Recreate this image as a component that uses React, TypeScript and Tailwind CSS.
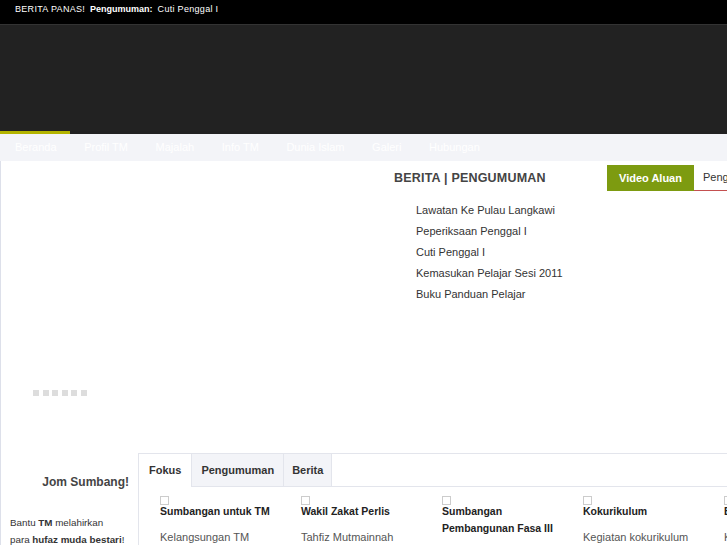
import React from "react";

const navItems = ["Beranda", "Profil TM", "Majalah", "Info TM", "Dunia Islam", "Galeri", "Hubungan"];

const newsItems = [
  "Lawatan Ke Pulau Langkawi",
  "Peperiksaan Penggal I",
  "Cuti Penggal I",
  "Kemasukan Pelajar Sesi 2011",
  "Buku Panduan Pelajar",
];

const focusCols = [
  { title: "Sumbangan untuk TM", text: "Kelangsungan TM" },
  { title: "Wakil Zakat Perlis", text: "Tahfiz Mutmainnah" },
  { title: "Sumbangan Pembangunan Fasa III", text: "" },
  { title: "Kokurikulum", text: "Kegiatan kokurikulum" },
  { title: "Buletin", text: "Keluaran" },
];

const App: React.FC = () => {
  return (
    <div className="w-[727px] h-[545px] overflow-hidden bg-white font-['Liberation_Sans',Arial,sans-serif]">
      {/* top ticker */}
      <div className="h-[24px] bg-black flex items-start pt-[3px] pl-[15px] text-[9px] text-white gap-[5px] whitespace-nowrap">
        <span className="tracking-[0.3px]">BERITA PANAS!</span>
        <span className="font-bold">Pengumuman:</span>
        <span className="tracking-[0.3px]">Cuti Penggal I</span>
      </div>

      {/* header */}
      <div className="h-[107px] bg-[#222222] border-t border-[#333333]" />

      {/* nav */}
      <div className="h-[30px] bg-[#f3f4f8] flex whitespace-nowrap">
        {navItems.map((item, i) => (
          <div
            key={item}
            className={`px-[13.8px] text-[11px] text-white flex items-center border-t-[3px] ${
              i === 0 ? "border-[#b3b400] pl-[15px]" : "border-[#212121]"
            }`}
          >
            {item}
          </div>
        ))}
        <div className="flex-1 border-t-[3px] border-[#212121]" />
      </div>

      {/* main */}
      <div className="h-[292px] flex border-l border-[#dde0ea]">
        <div className="w-[393px] shrink-0 pt-[229px] pl-[32px] flex gap-[3.6px]">
          {[0, 1, 2, 3, 4, 5].map((d) => (
            <div key={d} className="w-[6px] h-[6px] bg-[#dddddd]" />
          ))}
        </div>
        <div className="flex-1 pt-[4px] whitespace-nowrap">
          <div className="flex h-[26px] items-center">
            <div className="w-[213px] text-[12.5px] tracking-[0.2px] font-bold text-[#444444]">BERITA | PENGUMUMAN</div>
            <div className="h-[26px] px-[12px] bg-[#7d9b10] text-white text-[11px] font-bold flex items-center">
              Video Aluan
            </div>
            <div className="h-[26px] px-[9px] text-[11px] text-[#333333] flex items-center border-b border-[#c45050]">
              Pengumuman
            </div>
          </div>
          <ul className="mt-[9px] pl-[22px] text-[11px] text-[#333333] leading-[21px]">
            {newsItems.map((n) => (
              <li key={n}>{n}</li>
            ))}
          </ul>
        </div>
      </div>

      {/* bottom */}
      <div className="flex">
        <div className="w-[138px] shrink-0 border-l border-[#dde0ea]">
          <div className="h-[56px] pr-[9px] flex items-center justify-end pt-[2px] text-[12px] font-bold text-[#444444]">
            Jom Sumbang!
          </div>
          <div className="pl-[9px] pt-[5px] text-[9.8px] text-[#333333] leading-[17px] whitespace-nowrap">
            <div>
              Bantu <b>TM</b> melahirkan
            </div>
            <div>
              para <b>hufaz muda bestari</b>!
            </div>
          </div>
        </div>
        <div className="flex-1 border-t border-l border-[#e3e5ec]">
          <div className="flex h-[33px] text-[11px] font-bold text-[#333333] whitespace-nowrap">
            <div className="px-[10px] flex items-center bg-white border-r border-[#e3e5ec]">Fokus</div>
            <div className="px-[9px] flex items-center bg-[#f3f4f8] border-r border-b border-[#e3e5ec]">Pengumuman</div>
            <div className="px-[8px] flex items-center bg-[#f3f4f8] border-r border-b border-[#e3e5ec]">Berita</div>
            <div className="flex-1 border-b border-[#e3e5ec]" />
          </div>
          <div className="flex pl-[21px] pt-[9px]">
            {focusCols.map((c) => (
              <div key={c.title} className="w-[141px] shrink-0 pr-[12px]">
                <div className="w-[9px] h-[9px] border border-[#cccccc]" />
                <div className="-mt-[2px] text-[10.5px] font-bold text-[#222222] leading-[17px] min-h-[26px]">{c.title}</div>
                <div className="text-[11px] text-[#555555] leading-[17px]">{c.text}</div>
              </div>
            ))}
          </div>
        </div>
      </div>
    </div>
  );
};

export default App;
